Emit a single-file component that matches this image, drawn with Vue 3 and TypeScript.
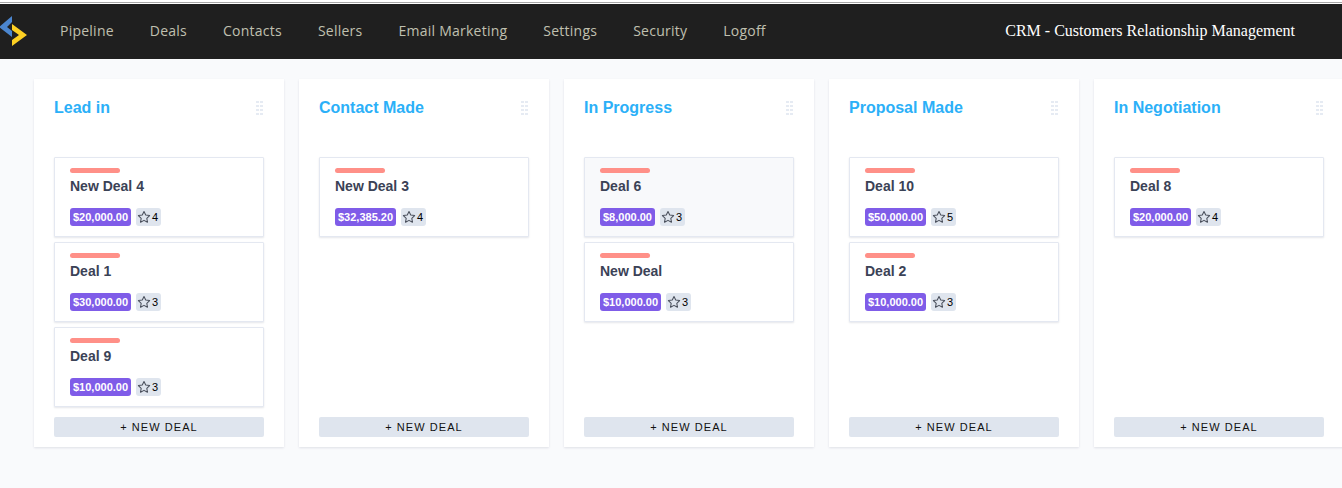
<script setup lang="ts">
interface Deal {
  name: string
  value: string
  stars: number
  hover?: boolean
}

interface Stage {
  title: string
  deals: Deal[]
}

const menu = ['Pipeline', 'Deals', 'Contacts', 'Sellers', 'Email Marketing', 'Settings', 'Security', 'Logoff']

const stages: Stage[] = [
  {
    title: 'Lead in',
    deals: [
      { name: 'New Deal 4', value: '$20,000.00', stars: 4 },
      { name: 'Deal 1', value: '$30,000.00', stars: 3 },
      { name: 'Deal 9', value: '$10,000.00', stars: 3 },
    ],
  },
  {
    title: 'Contact Made',
    deals: [{ name: 'New Deal 3', value: '$32,385.20', stars: 4 }],
  },
  {
    title: 'In Progress',
    deals: [
      { name: 'Deal 6', value: '$8,000.00', stars: 3, hover: true },
      { name: 'New Deal', value: '$10,000.00', stars: 3 },
    ],
  },
  {
    title: 'Proposal Made',
    deals: [
      { name: 'Deal 10', value: '$50,000.00', stars: 5 },
      { name: 'Deal 2', value: '$10,000.00', stars: 3 },
    ],
  },
  {
    title: 'In Negotiation',
    deals: [{ name: 'Deal 8', value: '$20,000.00', stars: 4 }],
  },
]
</script>

<template>
  <div class="page">
    <div class="top-line"></div>
    <header class="navbar">
      <svg class="logo" width="28" height="32" viewBox="0 0 28 32">
        <path d="M12 0L-1 11L12 21V15L7 11L12 6Z" fill="#4b86cf" />
        <path d="M12 8L27 19L12 30V24L19 19L12 14Z" fill="#fdd023" />
      </svg>
      <nav class="menu">
        <a v-for="item in menu" :key="item" class="menu-item">{{ item }}</a>
      </nav>
      <div class="brand">CRM - Customers Relationship Management</div>
    </header>

    <main class="board">
      <section v-for="stage in stages" :key="stage.title" class="stage">
        <div class="stage-head">
          <h2 class="stage-title">{{ stage.title }}</h2>
          <div class="grip">
            <i v-for="n in 8" :key="n"></i>
          </div>
        </div>
        <div class="deals">
          <article v-for="deal in stage.deals" :key="deal.name" class="deal" :class="{ hover: deal.hover }">
            <div class="deal-bar"></div>
            <div class="deal-name">{{ deal.name }}</div>
            <div class="deal-meta">
              <span class="value">{{ deal.value }}</span>
              <span class="stars">
                <svg width="14" height="14" viewBox="0 0 24 24" fill="none" stroke="#4a505c" stroke-width="1.8" stroke-linejoin="round">
                  <path d="M12 2.5l2.95 6.1 6.7.95-4.85 4.7 1.15 6.65L12 17.75 6.05 20.9l1.15-6.65-4.85-4.7 6.7-.95z" />
                </svg>
                {{ deal.stars }}
              </span>
            </div>
          </article>
        </div>
        <button class="new-deal">+ NEW DEAL</button>
      </section>
    </main>
  </div>
</template>

<style>
html, body {
  margin: 0;
  overflow: hidden;
  background: #f9fafc;
}
</style>

<style scoped>
.page {
  height: 488px;
  overflow: hidden;
  background: #f9fafc;
  font-family: "Liberation Sans", Arial, sans-serif;
}
.top-line {
  height: 4px;
  box-sizing: border-box;
  background: #fff;
  border-top: 2px solid #fff;
}
.top-line::after {
  content: "";
  display: block;
  height: 1px;
  background: #a8a8a8;
}
.navbar {
  height: 55px;
  box-sizing: border-box;
  padding-bottom: 2px;
  background: #1f1f1f;
  display: flex;
  align-items: center;
  position: relative;
}
.logo {
  position: absolute;
  left: 0;
  top: 12px;
}
.menu {
  display: flex;
  gap: 36px;
  margin-left: 60px;
}
.menu-item {
  font-family: "Open Sans", sans-serif;
  font-size: 14px;
  color: #c0c0b0;
  letter-spacing: 0.24px;
}
.brand {
  margin-left: auto;
  margin-right: 47px;
  font-family: "Liberation Serif", serif;
  font-size: 16px;
  color: #fff;
}
.board {
  display: flex;
  gap: 15px;
  padding: 20px 0 0 34px;
}
.stage {
  width: 250px;
  height: 368px;
  flex-shrink: 0;
  box-sizing: border-box;
  padding: 20px 20px 10px;
  background: #fff;
  box-shadow: 0 1px 2px rgba(40, 50, 80, 0.12);
  display: flex;
  flex-direction: column;
}
.stage-head {
  display: flex;
  justify-content: space-between;
  align-items: flex-start;
  height: 58px;
}
.stage-title {
  margin: 0;
  font-size: 16px;
  line-height: 18px;
  font-weight: 700;
  color: #2bb0f8;
}
.grip {
  display: grid;
  grid-template-columns: 3px 3px;
  gap: 2px 1px;
  width: 7px;
  margin: 2px 1px 0 0;
}
.grip i {
  height: 2px;
  background: #e6ebf3;
}
.deals {
  flex: 1;
  display: flex;
  flex-direction: column;
  gap: 5px;
}
.deal {
  height: 80px;
  box-sizing: border-box;
  padding: 10px 15px 0;
  background: #fff;
  border: 1px solid #e4e8f1;
  box-shadow: 0 1px 2px rgba(40, 50, 80, 0.12);
  border-radius: 1px;
}
.deal.hover {
  background: #f8f9fb;
}
.deal-bar {
  width: 50px;
  height: 5px;
  border-radius: 3px;
  background: #ff9088;
}
.deal-name {
  margin-top: 5px;
  font-size: 14px;
  line-height: 16px;
  font-weight: 700;
  color: #3b4256;
}
.deal-meta {
  display: flex;
  gap: 5px;
  margin-top: 14px;
}
.value {
  height: 18px;
  padding: 0 3px;
  border-radius: 3px;
  background: #7f5ce8;
  color: #fff;
  font-size: 11px;
  font-weight: 700;
  line-height: 18px;
}
.stars {
  display: flex;
  align-items: center;
  gap: 1px;
  height: 18px;
  padding: 0 3px 0 1px;
  border-radius: 3px;
  background: #dfe5ee;
  color: #000;
  font-size: 11px;
}
.new-deal {
  display: block;
  width: 100%;
  height: 20px;
  padding: 0;
  border: none;
  border-radius: 2px;
  background: #dfe5ee;
  color: #111;
  font-family: "Liberation Sans", Arial, sans-serif;
  font-size: 11px;
  letter-spacing: 1.05px;
}
</style>
